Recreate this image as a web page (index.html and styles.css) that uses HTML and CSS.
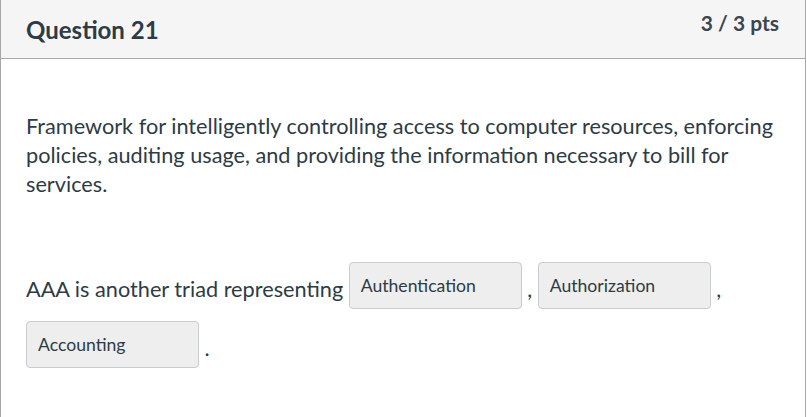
FILE: index.html
```html
<!DOCTYPE html>
<html>
<head>
<meta charset="utf-8">
<link rel="stylesheet" href="styles.css">
</head>
<body>
<div class="card">
  <div class="header">
    <h2 class="title">Question 21</h2>
    <div class="pts">3 / 3 pts</div>
  </div>
  <div class="content">
    <p class="text">Framework for intelligently controlling access to computer resources, enforcing policies, auditing usage, and providing the information necessary to bill for services.</p>
    <p class="text blanks">AAA is another triad representing <span class="box">Authentication</span> , <span class="box">Authorization</span> , <span class="box">Accounting</span> .</p>
  </div>
</div>
</body>
</html>
```
FILE: styles.css
```css
html, body {
  margin: 0;
  padding: 0;
  background: #ffffff;
}
body {
  font-family: Lato, "Open Sans", sans-serif;
  color: #2d3b45;
}
.card {
  width: 804px;
  height: 417px;
  border-left: 1px solid #a8a8a8;
  border-right: 1px solid #a8a8a8;
  box-sizing: content-box;
}
.header {
  height: 58px;
  background: #f5f5f5;
  border-bottom: 1px solid #a8a8a8;
  display: flex;
  justify-content: space-between;
  align-items: flex-start;
  padding: 0 26px 0 25px;
}
.title {
  margin: 16px 0 0;
  font-size: 24px;
  font-weight: 700;
  line-height: 28px;
}
.pts {
  margin-top: 9px;
  font-size: 21px;
  font-weight: 700;
  line-height: 28px;
  color: #3b4650;
}
.content {
  padding: 53px 25px 0;
}
.text {
  margin: 0;
  font-size: 21.7px;
  line-height: 29px;
}
.blanks {
  margin-top: 61px;
  line-height: 59px;
}
.box {
  display: inline-block;
  box-sizing: border-box;
  width: 173px;
  height: 47px;
  padding: 11px 11px 0;
  vertical-align: 5px;
  background: #eeeeee;
  border: 1px solid #c7cdd1;
  border-radius: 4px;
  font-size: 17.6px;
  line-height: 24px;
}
```
